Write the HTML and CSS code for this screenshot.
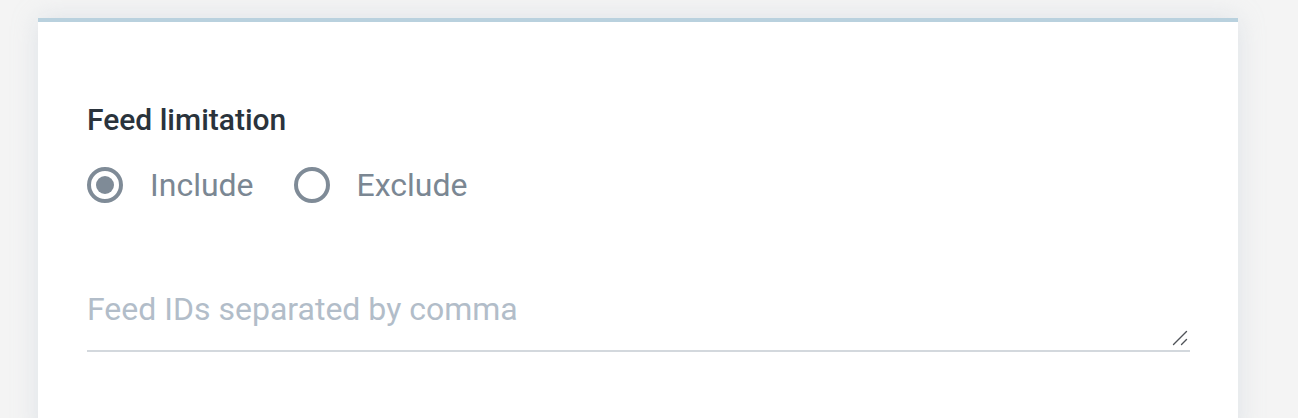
FILE: index.html
```html
<!DOCTYPE html>
<html>
<head>
<meta charset="utf-8">
<link rel="stylesheet" href="styles.css">
</head>
<body>
<div class="page">
  <div class="card">
    <div class="field-title">Feed limitation</div>
    <div class="radios">
      <label class="radio"><span class="dot checked"></span><span class="radio-label">Include</span></label>
      <label class="radio"><span class="dot"></span><span class="radio-label">Exclude</span></label>
    </div>
    <div class="textarea-wrap">
      <textarea class="ids" placeholder="Feed IDs separated by comma"></textarea>
      <svg class="grip" width="16" height="16" viewBox="0 0 16 16" aria-hidden="true">
        <path d="M1.5 14.5 L14.5 1.5 M9.5 14.5 L14.5 9.5" stroke="#4f5358" stroke-width="1.4" stroke-linecap="round" fill="none"/>
      </svg>
    </div>
  </div>
</div>
</body>
</html>
```
FILE: styles.css
```css
html, body {
  margin: 0;
  padding: 0;
  background: #f4f4f4;
  font-family: Roboto, "Liberation Sans", sans-serif;
}
.page {
  padding: 18px 60px 0 38px;
  height: 400px;
  overflow: hidden;
}
.card {
  width: 1200px;
  box-sizing: border-box;
  background: #fff;
  border-top: 4px solid #b9d1de;
  box-shadow: 0 0 24px rgba(180, 195, 210, 0.35);
  padding: 80px 48px 0 49px;
  height: 420px;
}
.field-title {
  font-size: 30px;
  font-weight: 500;
  color: #2a333c;
  line-height: 36px;
}
.radios {
  display: flex;
  gap: 40px;
  margin-top: 27px;
  align-items: center;
}
.radio {
  display: flex;
  align-items: center;
  gap: 27px;
}
.dot {
  width: 36px;
  height: 36px;
  box-sizing: border-box;
  border: 4px solid #7f8b97;
  border-radius: 50%;
  display: flex;
  align-items: center;
  justify-content: center;
}
.dot.checked::after {
  content: "";
  width: 18px;
  height: 18px;
  border-radius: 50%;
  background: #7f8b97;
}
.radio-label {
  font-size: 32px;
  color: #7b8793;
  line-height: 40px;
}
.textarea-wrap {
  margin-top: 84px;
  position: relative;
}
.ids {
  display: block;
  width: 100%;
  box-sizing: border-box;
  border: none;
  border-bottom: 2px solid #d3d8dd;
  outline: none;
  padding: 0;
  font-family: Roboto, "Liberation Sans", sans-serif;
  font-size: 32px;
  line-height: 40px;
  height: 63px;
  color: #2a333c;
  resize: none;
}
.ids::placeholder {
  color: #b2bdc9;
}
.grip {
  position: absolute;
  right: 2px;
  bottom: 6px;
  pointer-events: none;
}
```
